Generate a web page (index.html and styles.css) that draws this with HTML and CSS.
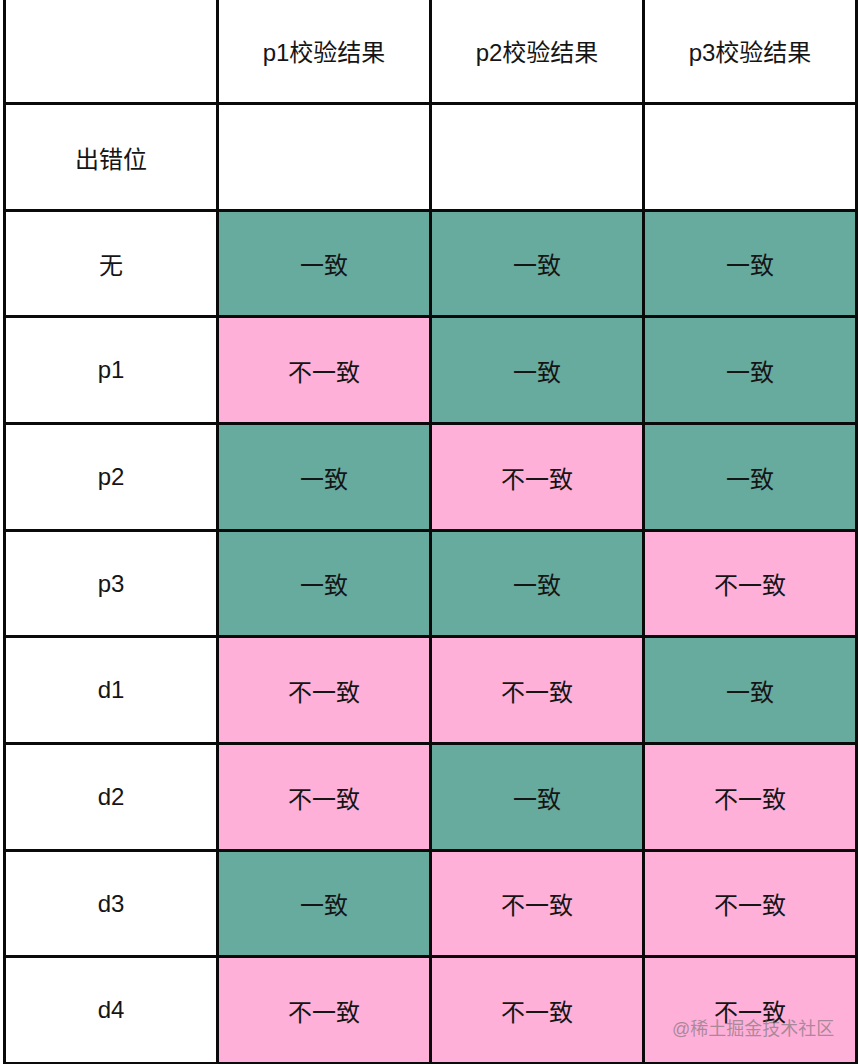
FILE: index.html
```html
<!DOCTYPE html>
<html lang="zh-CN">
<head>
<meta charset="utf-8">
<title>校验结果</title>
<link rel="stylesheet" href="styles.css">
</head>
<body>
<div class="page">
  <div class="grid">
    <div class="cell"></div>
    <div class="cell">p1校验结果</div>
    <div class="cell">p2校验结果</div>
    <div class="cell">p3校验结果</div>

    <div class="cell">出错位</div>
    <div class="cell"></div>
    <div class="cell"></div>
    <div class="cell"></div>

    <div class="cell">无</div>
    <div class="cell ok">一致</div>
    <div class="cell ok">一致</div>
    <div class="cell ok">一致</div>

    <div class="cell">p1</div>
    <div class="cell bad">不一致</div>
    <div class="cell ok">一致</div>
    <div class="cell ok">一致</div>

    <div class="cell">p2</div>
    <div class="cell ok">一致</div>
    <div class="cell bad">不一致</div>
    <div class="cell ok">一致</div>

    <div class="cell">p3</div>
    <div class="cell ok">一致</div>
    <div class="cell ok">一致</div>
    <div class="cell bad">不一致</div>

    <div class="cell">d1</div>
    <div class="cell bad">不一致</div>
    <div class="cell bad">不一致</div>
    <div class="cell ok">一致</div>

    <div class="cell">d2</div>
    <div class="cell bad">不一致</div>
    <div class="cell ok">一致</div>
    <div class="cell bad">不一致</div>

    <div class="cell">d3</div>
    <div class="cell ok">一致</div>
    <div class="cell bad">不一致</div>
    <div class="cell bad">不一致</div>

    <div class="cell">d4</div>
    <div class="cell bad">不一致</div>
    <div class="cell bad">不一致</div>
    <div class="cell bad">不一致</div>
  </div>
  <div class="watermark">@稀土掘金技术社区</div>
</div>
</body>
</html>
```

FILE: styles.css
```css
html, body {
  margin: 0;
  padding: 0;
  background: #ffffff;
}

.page {
  position: relative;
  width: 860px;
  height: 1064px;
  overflow: hidden;
}

.grid {
  display: grid;
  grid-template-columns: repeat(4, 210px);
  grid-template-rows: 104px 104px 103px 104px 104px 103px 104px 104px 103px 104px;
  gap: 3px;
  padding: 3px;
  background: #0a0a0a;
  width: max-content;
  margin-top: -5px;
  margin-left: 3px;
}

.cell {
  background: #ffffff;
  display: flex;
  align-items: center;
  justify-content: center;
  font-family: "Liberation Sans", "Noto Sans CJK SC", sans-serif;
  font-size: 24px;
  color: #151515;
}

.cell.ok {
  background: #67ab9f;
}

.cell.bad {
  background: #ffb0d9;
}

.watermark {
  position: absolute;
  left: 672px;
  top: 1014px;
  font-family: "Liberation Sans", "Noto Sans CJK SC", sans-serif;
  font-size: 18px;
  color: rgba(110, 110, 110, 0.6);
  white-space: nowrap;
}
```
